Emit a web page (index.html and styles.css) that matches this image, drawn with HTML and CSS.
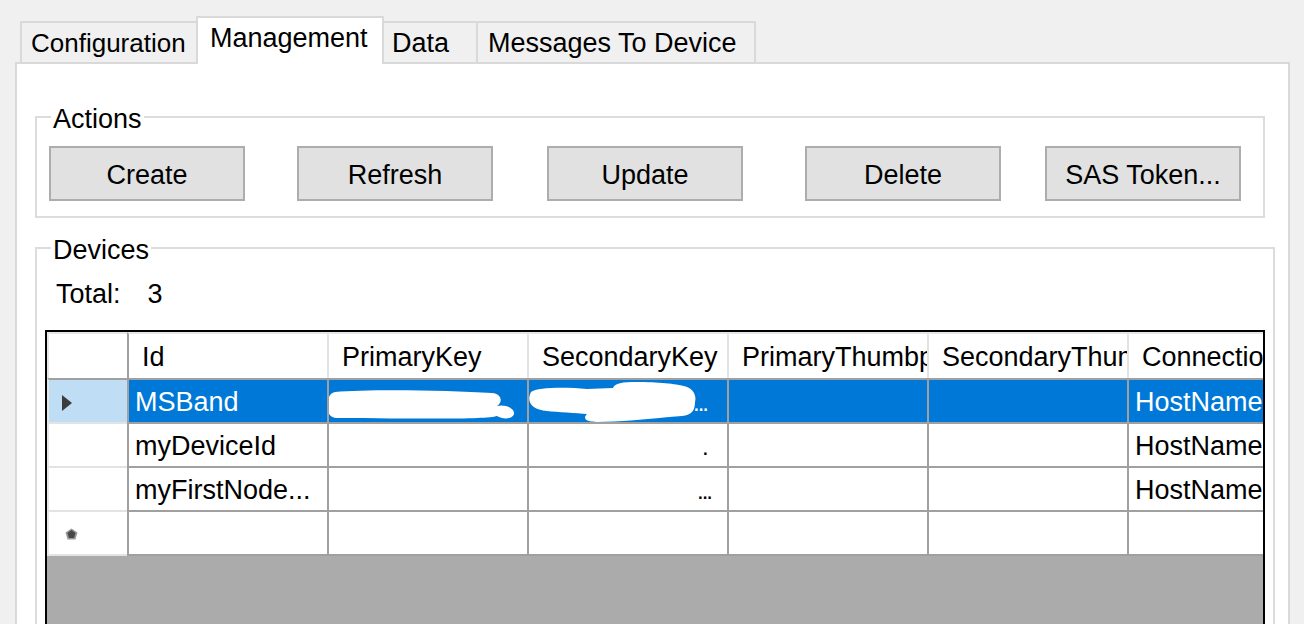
FILE: index.html
```html
<!DOCTYPE html>
<html>
<head>
<meta charset="utf-8">
<title>Device Management</title>
<link rel="stylesheet" href="styles.css">
</head>
<body>
<div class="tabs">
  <div class="tab t-config">Configuration</div>
  <div class="tab active t-mgmt">Management</div>
  <div class="tab t-data">Data</div>
  <div class="tab t-msg">Messages To Device</div>
</div>
<div class="panel">
  <div class="group actions">
    <div class="legend">Actions</div>
    <div class="buttons">
      <button class="btn">Create</button>
      <button class="btn b-refresh">Refresh</button>
      <button class="btn b-update">Update</button>
      <button class="btn b-delete">Delete</button>
      <button class="btn b-sas">SAS Token...</button>
    </div>
  </div>
  <div class="group devices">
    <div class="legend">Devices</div>
    <div class="total"><span>Total:</span><span class="count">3</span></div>
    <div class="grid">
      <div class="row head">
        <div class="rh"></div>
        <div class="cell hc first">Id</div>
        <div class="cell hc">PrimaryKey</div>
        <div class="cell hc">SecondaryKey</div>
        <div class="cell hc">PrimaryThumbprint</div>
        <div class="cell hc">SecondaryThumbprint</div>
        <div class="cell hc">ConnectionString</div>
      </div>
      <div class="row data selected">
        <div class="rh rh-top"><svg class="arrow" width="12" height="18" viewBox="0 0 12 18"><path d="M1 1 L11 9 L1 17 Z" fill="#3c3c3c"/></svg></div>
        <div class="cell">MSBand</div>
        <div class="cell redact">
          <svg class="blob blob1" width="190" height="34" viewBox="0 0 190 34"><path d="M8 4 C40 1 120 2 165 5 C175 6 176 14 170 18 C178 16 188 20 187 26 C186 31 176 32 170 28 C160 31 120 31 10 30 C2 30 0 24 1 16 C1 9 3 5 8 4 Z" fill="#fff"/></svg>
        </div>
        <div class="cell redact">
          <svg class="blob blob2" width="172" height="42" viewBox="0 0 172 42"><path d="M4 10 C10 5 40 5 60 7 L86 6 C88 1 95 0 110 0 C130 0 150 2 157 4 C165 6 170 12 168 20 C168 28 165 33 155 34 C120 37 90 40 70 40 C60 40 55 37 60 32 C50 31 30 30 20 29 C5 28 -1 20 4 10 Z" fill="#fff"/></svg>
          <span class="dots d1">...</span>
        </div>
        <div class="cell"></div>
        <div class="cell"></div>
        <div class="cell">HostName=myhub.azure-devices.net</div>
      </div>
      <div class="row data">
        <div class="rh"></div>
        <div class="cell">myDeviceId</div>
        <div class="cell"></div>
        <div class="cell"><span class="dots d2">.</span></div>
        <div class="cell"></div>
        <div class="cell"></div>
        <div class="cell">HostName=myhub.azure-devices.net</div>
      </div>
      <div class="row data">
        <div class="rh"></div>
        <div class="cell">myFirstNode...</div>
        <div class="cell"></div>
        <div class="cell"><span class="dots d3">...</span></div>
        <div class="cell"></div>
        <div class="cell"></div>
        <div class="cell">HostName=myhub.azure-devices.net</div>
      </div>
      <div class="row data newrow">
        <div class="rh"><svg class="star" width="13" height="12" viewBox="0 0 13 12"><path d="M6.5 0.5 L12.5 4.5 L10.5 11.5 L2.5 11.5 L0.5 4.5 Z" fill="#9a9a9a"/><path d="M6.5 2 L10.5 5 L9 10 L4 10 L2.5 5 Z" fill="#474747"/></svg></div>
        <div class="cell"></div>
        <div class="cell"></div>
        <div class="cell"></div>
        <div class="cell"></div>
        <div class="cell"></div>
        <div class="cell"></div>
      </div>
    </div>
  </div>
</div>
</body>
</html>
```
FILE: styles.css
```css
html, body {
  margin: 0;
  padding: 0;
}
body {
  background: #f0f0f0;
  font-family: "Liberation Sans", Arial, sans-serif;
  font-size: 27px;
  color: #000;
  width: 1304px;
  height: 624px;
  overflow: hidden;
}

/* Tabs */
.tabs {
  display: flex;
  align-items: flex-end;
  box-sizing: border-box;
  height: 62px;
  padding-top: 16px;
  padding-left: 20px;
}
.tab {
  box-sizing: border-box;
  height: 41px;
  line-height: 40px;
  border: 2px solid #d9d9d9;
  border-bottom: none;
  background: #f0f0f0;
  white-space: nowrap;
  overflow: hidden;
}
.t-config { width: 176px; border-right: none; padding-left: 9px; font-size: 26px; }
.t-mgmt {
  width: 188px;
  padding-left: 12px;
}
.t-data { width: 92px; border-left: none; border-right: none; padding-left: 8px; }
.t-msg { width: 280px; padding-left: 10px; }
.tab.active {
  height: 48px;
  margin-bottom: -2px;
  background: #fff;
  position: relative;
  z-index: 1;
}

/* Panel */
.panel {
  box-sizing: border-box;
  margin-left: 15px;
  width: 1275px;
  height: 600px;
  border: 2px solid #d9d9d9;
  background: #fff;
  padding-top: 52px;
}

.group {
  box-sizing: border-box;
  border: 2px solid #dcdcdc;
  margin-left: 18px;
  display: flex;
  flex-direction: column;
  align-items: flex-start;
}
.legend {
  margin-top: -15px;
  margin-left: 14px;
  padding: 0 2px;
  line-height: 32px;
  height: 30px;
  background: #fff;
}

.actions {
  width: 1230px;
  height: 102px;
}
.buttons {
  display: flex;
  margin-top: 13px;
  margin-left: 12px;
}
.btn {
  box-sizing: border-box;
  width: 196px;
  height: 55px;
  border: 2px solid #adadad;
  background: #e1e1e1;
  font-family: inherit;
  font-size: 27px;
  color: #000;
  padding: 3px 0 0 0;
  margin: 0;
}
.b-refresh { margin-left: 52px; }
.b-update { margin-left: 54px; }
.b-delete { margin-left: 62px; }
.b-sas { margin-left: 44px; }

.devices {
  width: 1240px;
  height: 420px;
  margin-top: 29px;
}
.total {
  margin-top: 14px;
  padding-left: 19px;
  line-height: 32px;
}
.count { margin-left: 27px; }

/* Grid */
.grid {
  box-sizing: border-box;
  margin-top: 20px;
  margin-left: 8px;
  width: 1220px;
  height: 320px;
  border: 2px solid #000;
  background: #ababab;
  overflow: hidden;
}
.row {
  display: flex;
  width: 1280px;
}
.rh {
  box-sizing: border-box;
  flex: 0 0 80px;
  width: 80px;
  background: #fff;
  border-left: 2px solid #e6e6e6;
  display: flex;
  align-items: center;
}
.cell {
  box-sizing: border-box;
  flex: 0 0 200px;
  width: 200px;
  border-left: 2px solid #a0a0a0;
  background: #fff;
  white-space: nowrap;
  overflow: hidden;
  position: relative;
}
.head .rh, .head .cell {
  height: 46px;
  border-top: 2px solid #e6e6e6;
}
.head .cell {
  line-height: 46px;
  padding-left: 13px;
  border-left-color: #e3e3e3;
}
.head .cell.first { border-left-color: #a0a0a0; }

.data .rh, .data .cell {
  height: 44px;
  border-top: 2px solid #a0a0a0;
}
.data .rh { border-top-color: #e3e3e3; }
.selected .rh { border-top-color: #a0a0a0; background: #bfddf5; }
.data .cell {
  line-height: 44px;
  padding-left: 6px;
}
.selected .cell {
  background: #0078d7;
  color: #fff;
}
.newrow .rh, .newrow .cell {
  height: 46px;
  border-bottom: 2px solid #a0a0a0;
}
.newrow .rh { border-bottom-color: #e3e3e3; }

.arrow { margin-left: 12px; margin-top: 4px; }
.star { margin-left: 16px; margin-top: 2px; }

.blob {
  position: absolute;
  display: block;
}
.blob1 { left: -2px; top: 8px; }
.blob2 { left: -2px; top: 2px; }

.dots {
  letter-spacing: -2px;
  font-size: 24px;
}
.d1 { padding-left: 158px; position: relative; }
.d2 { padding-left: 167px; }
.d3 { padding-left: 162px; }
```
